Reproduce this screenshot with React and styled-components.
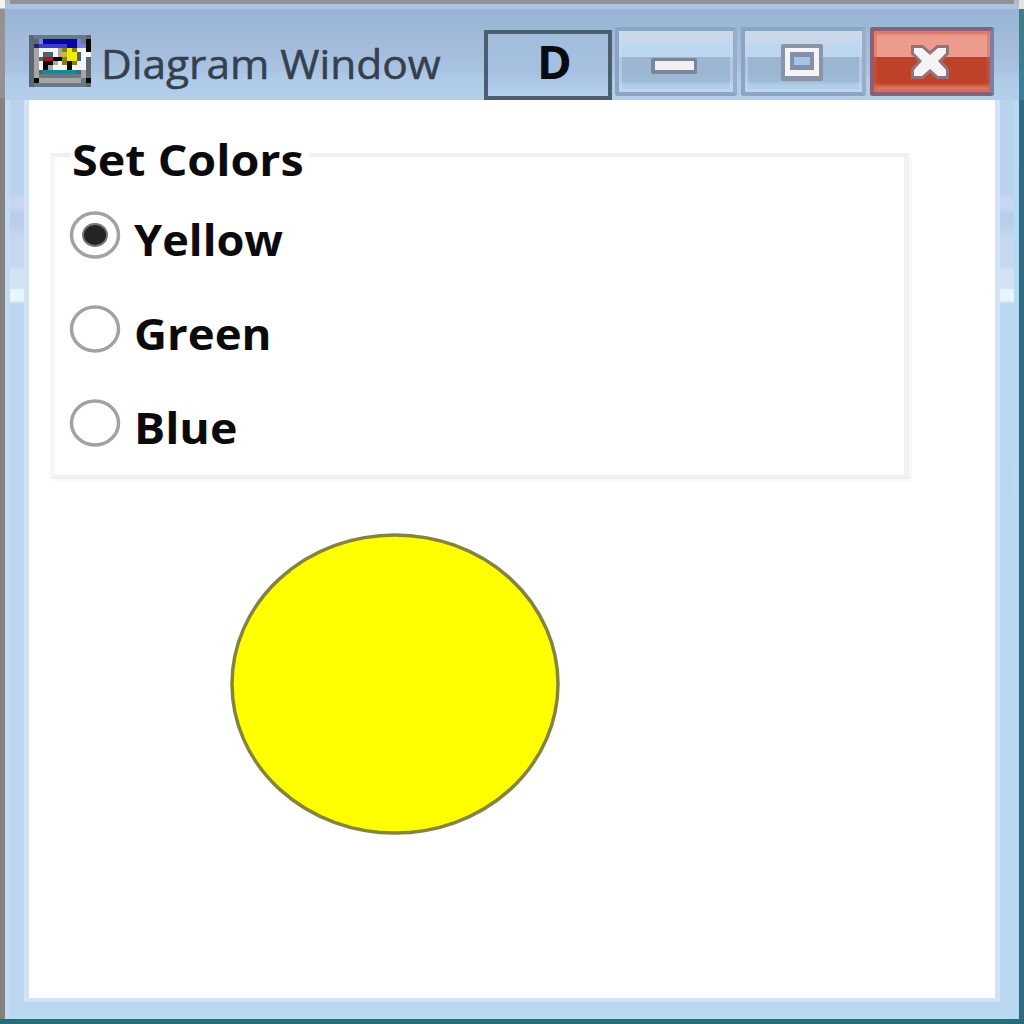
import React, { useState } from "react";
import styled, { createGlobalStyle } from "styled-components";

const GlobalStyle = createGlobalStyle`
  * { box-sizing: border-box; }
  body { margin: 0; overflow: hidden; background: #fff; }
`;

const Desktop = styled.div`
  width: 1024px;
  height: 1024px;
  padding: 4px 5px 5px;
  background: linear-gradient(90deg, transparent 10px, #929297 10px, #929297 1014px, transparent 1014px) top / 100% 4px no-repeat,
    linear-gradient(#276c78, #276c78) bottom / 100% 5px no-repeat,
    linear-gradient(#e4e2e4 0 9px, #3b7d8b 9px 70px, #3a7e98 70px 100px, #2f6b80 100px) right / 5px 100% no-repeat,
    linear-gradient(#f4f2f2 0 8px, #939396 9px 98px, #828282 99px) left / 5px 100% no-repeat,
    #b9b9be;
  font-family: "Open Sans", "Noto Sans", sans-serif;
`;

const Frame = styled.div`
  display: flex;
  flex-direction: column;
  width: 1014px;
  height: 1015px;
  border-radius: 5px 5px 0 0;
  overflow: hidden;
  background: #bad4ef;
`;

const TitleBar = styled.header`
  display: flex;
  align-items: flex-start;
  height: 96px;
  padding: 23px 25px 0 24px;
  background: linear-gradient(
    #adc3e2 0 5px, #9bb5da 5px 14px, #9ab9d7 14px 28px, #a2bad8 29px,
    #a6bddd 52px, #a9c4e2 66px, #afcbe8 75px, #b3cfeb 96px
  );
`;

const AppIcon = styled.svg`
  width: 62px;
  height: 52px;
  margin-top: 8px;
  flex: none;
`;

const Title = styled.h1`
  width: 393px;
  height: 60px;
  margin: 6px 0 0;
  padding-left: 10px;
  font-size: 41px;
  line-height: 60px;
  font-weight: 400;
  color: #35404f;
  -webkit-text-stroke: 0.5px #35404f;
  white-space: nowrap;
  span { display: inline-block; transform-origin: left; transform: scaleX(1.035); }
`;

const LetterButton = styled.button`
  width: 129px;
  height: 70px;
  margin: 3px 3px 0 0;
  padding: 0 0 8px 13px;
  border: 4px solid #4b5f70;
  background: linear-gradient(#a1bddb, #a7c0e0 60%, #b5d2f0);
  font: 700 47px/54px "Open Sans", sans-serif;
  color: #0a0b10;
`;

const WindowButton = styled.button`
  display: flex;
  align-items: center;
  justify-content: center;
  width: ${(p) => p.$width}px;
  height: 69px;
  margin-right: ${(p) => p.$gap || 0}px;
  padding: 0 ${(p) => (p.$danger ? 5 : 4)}px 0 0;
  border: 4px solid ${(p) => (p.$danger ? "#8a6079" : "#8ba4c3")};
  border-right-color: ${(p) => (p.$danger ? "#7d7f9f" : "#99acc9")};
  border-radius: 3px;
  background: ${(p) =>
    p.$danger
      ? "linear-gradient(#e88d80 0 4px, #ed9b8d 5px 26px, #be412a 26px 52px, #dc7765 57px)"
      : "linear-gradient(#cbd8e9 0 9px, #bdd6ef 14px 26px, #9bb5d2 26px 40px, #9dbbd8 50px, #b1cee9 54px)"};
  box-shadow: inset 0 0 0 3px ${(p) => (p.$danger ? "#d15f4a66" : "#c9dbf088")};
`;

const MinimizeGlyph = styled.svg`
  width: 48px;
  height: 18px;
  margin-top: 8px;
`;

const Glyph = styled.svg`
  width: 44px;
  height: 38px;
`;

const SideGlow = styled.div`
  display: flex;
  flex: 1;
  padding: 0 19px 17px;
  background:
    linear-gradient(#c0dcf5 0 95px, #c4dcf3 95px) left / 5px 100% no-repeat,
    linear-gradient(#b4ddf5, #b3dcf4) right / 5px 100% no-repeat,
    linear-gradient(#b3dcf5, #b3dcf5) bottom / 100% 4px no-repeat,
    linear-gradient(#b9d2ee 0 94px, #c8d5f3 98px 108px, #bacdea 114px 123px, #c5d8f0 136px 166px, #d3e3f3 170px 188px, #e7f6ff 190px 200px, #bbd6f0 204px);
`;

const Client = styled.main`
  width: 976px;
  height: 902px;
  border: 5px solid #d3e2f4;
  border-top: 0;
  border-bottom-width: 4px;
  background: #fff;
`;

const ColorGroup = styled.fieldset`
  display: flex;
  flex-direction: column;
  width: 859px;
  height: 342px;
  margin: 37px 0 0 21px;
  padding: 19px 0 0 16px;
  border: 5px solid #f6f6f6;
  border-right: 5px solid #f1f1f1;
  border-top: 4px solid #f0f0f0;
  border-bottom: 4px solid #efefef;
  box-shadow: 4px 4px 0 -1px #f9f9f9;
`;

const GroupLabel = styled.legend`
  width: 238px;
  height: 36px;
  padding: 0 1px;
  font-size: 43px;
  line-height: 46px;
  font-weight: 700;
  color: #0b0b0d;
  white-space: nowrap;
  span { display: inline-block; transform-origin: left; transform: scaleX(1.085); }
`;

const Option = styled.label`
  display: flex;
  flex: none;
  align-items: center;
  height: 94px;
  font-size: 43px;
  font-weight: 700;
  color: #0b0b0d;
  input { appearance: none; width: 0; height: 0; margin: 0; }
`;

const RadioMark = styled.svg`
  width: 52px;
  height: 50px;
  flex: none;
  margin: 0 13px 8px -2px;
`;

const OptionText = styled.span`
  display: inline-block;
  transform-origin: left;
  transform: scaleX(${(p) => p.$stretch});
`;

const Shape = styled.svg`
  display: block;
  width: 332px;
  height: 304px;
  margin: 53px 0 0 200px;
`;

const ICON_ROWS = [
  "smmmmmmmmmmms",
  "ssbBBBBBBBbmk",
  "snuuuuuuBBbbk",
  "sgwwwwgoYowwk",
  "sgwddwgyYYdww",
  "sgdrrkkoYYdws",
  "sgwkkgwokowws",
  "sgwkgwwwkwwws",
  "sgdtttttttdgs",
  "sgmmmmmmmmmgs",
  "skgggggggggmk",
  "smmmmmmmmmmms",
];
const ICON_COLORS = {
  s: "#5b6874", m: "#667b8a", b: "#7d7fda", B: "#0505a9", u: "#3d3dd2",
  n: "#22226c", k: "#080909", g: "#a9a5a5", w: "#f5f5f8", y: "#c5bd38",
  Y: "#efed08", o: "#858015", r: "#b01518", d: "#49646c", t: "#168b95",
};

function DiagramIcon() {
  return (
    <AppIcon viewBox="0 0 13 12" preserveAspectRatio="none" shapeRendering="crispEdges">
      {ICON_ROWS.flatMap((row, y) =>
        [...row].map((c, x) => (
          <rect key={`${x}-${y}`} x={x} y={y} width="1" height="1" fill={ICON_COLORS[c]} />
        ))
      )}
    </AppIcon>
  );
}

const COLORS = [
  { name: "Yellow", fill: "#ffff00", stretch: 1.05 },
  { name: "Green", fill: "#00ff00", stretch: 1.06 },
  { name: "Blue", fill: "#0000ff", stretch: 1.08 },
];

export default function App() {
  const [selected, setSelected] = useState("Yellow");
  const current = COLORS.find((c) => c.name === selected);
  return (
    <Desktop>
      <GlobalStyle />
      <Frame>
        <TitleBar>
          <DiagramIcon />
          <Title><span>Diagram Window</span></Title>
          <LetterButton>D</LetterButton>
          <WindowButton $width={122} $gap={4} aria-label="Minimize">
            <MinimizeGlyph viewBox="0 0 48 18">
              <rect x="1" y="1" width="46" height="16" rx="2" fill="#7c8499" />
              <rect x="5" y="4" width="39" height="9" fill="#f1f1f2" />
            </MinimizeGlyph>
          </WindowButton>
          <WindowButton $width={125} $gap={4} aria-label="Maximize">
            <Glyph viewBox="0 0 44 38">
              <rect x="1" y="1" width="42" height="37" rx="2" fill="#8994a8" />
              <rect x="5" y="5" width="34" height="28" fill="#f5f3f5" />
              <rect x="10" y="9" width="24" height="18" fill="#8290a9" />
              <rect x="14" y="14" width="16" height="8" fill="#a7c3e8" />
            </Glyph>
          </WindowButton>
          <WindowButton $width={124} $danger aria-label="Close">
            <Glyph viewBox="0 0 44 38">
              <path d="M3 2H15L22 8L29 2H41V11L34 18L41 26V36H29L22 30L15 36H3V26L10 18L3 11Z" fill="#93737b" />
              <path d="M6 5H14L22 12L30 5H38V10L30 18L38 27V33H30L22 26L14 33H6V27L14 18L6 10Z" fill="#f5f3f4" />
            </Glyph>
          </WindowButton>
        </TitleBar>
        <SideGlow>
          <Client>
            <ColorGroup>
              <GroupLabel><span>Set Colors</span></GroupLabel>
              {COLORS.map((c) => (
                <Option key={c.name}>
                  <input type="radio" name="color" checked={selected === c.name} onChange={() => setSelected(c.name)} />
                  <RadioMark viewBox="0 0 52 50">
                    <ellipse cx="26" cy="25" rx="23.5" ry="22" fill="#fff" stroke="#a2a2a2" strokeWidth="3.5" />
                    {selected === c.name && (
                      <ellipse cx="26" cy="25" rx="12" ry="11" fill="#242424" stroke="#777" strokeWidth="2" />
                    )}
                  </RadioMark>
                  <OptionText $stretch={c.stretch}>{c.name}</OptionText>
                </Option>
              ))}
            </ColorGroup>
            <Shape viewBox="0 0 332 304">
              <ellipse cx="166" cy="152" rx="163" ry="149" fill={current.fill} stroke="#84843d" strokeWidth="3.5" />
            </Shape>
          </Client>
        </SideGlow>
      </Frame>
    </Desktop>
  );
}
